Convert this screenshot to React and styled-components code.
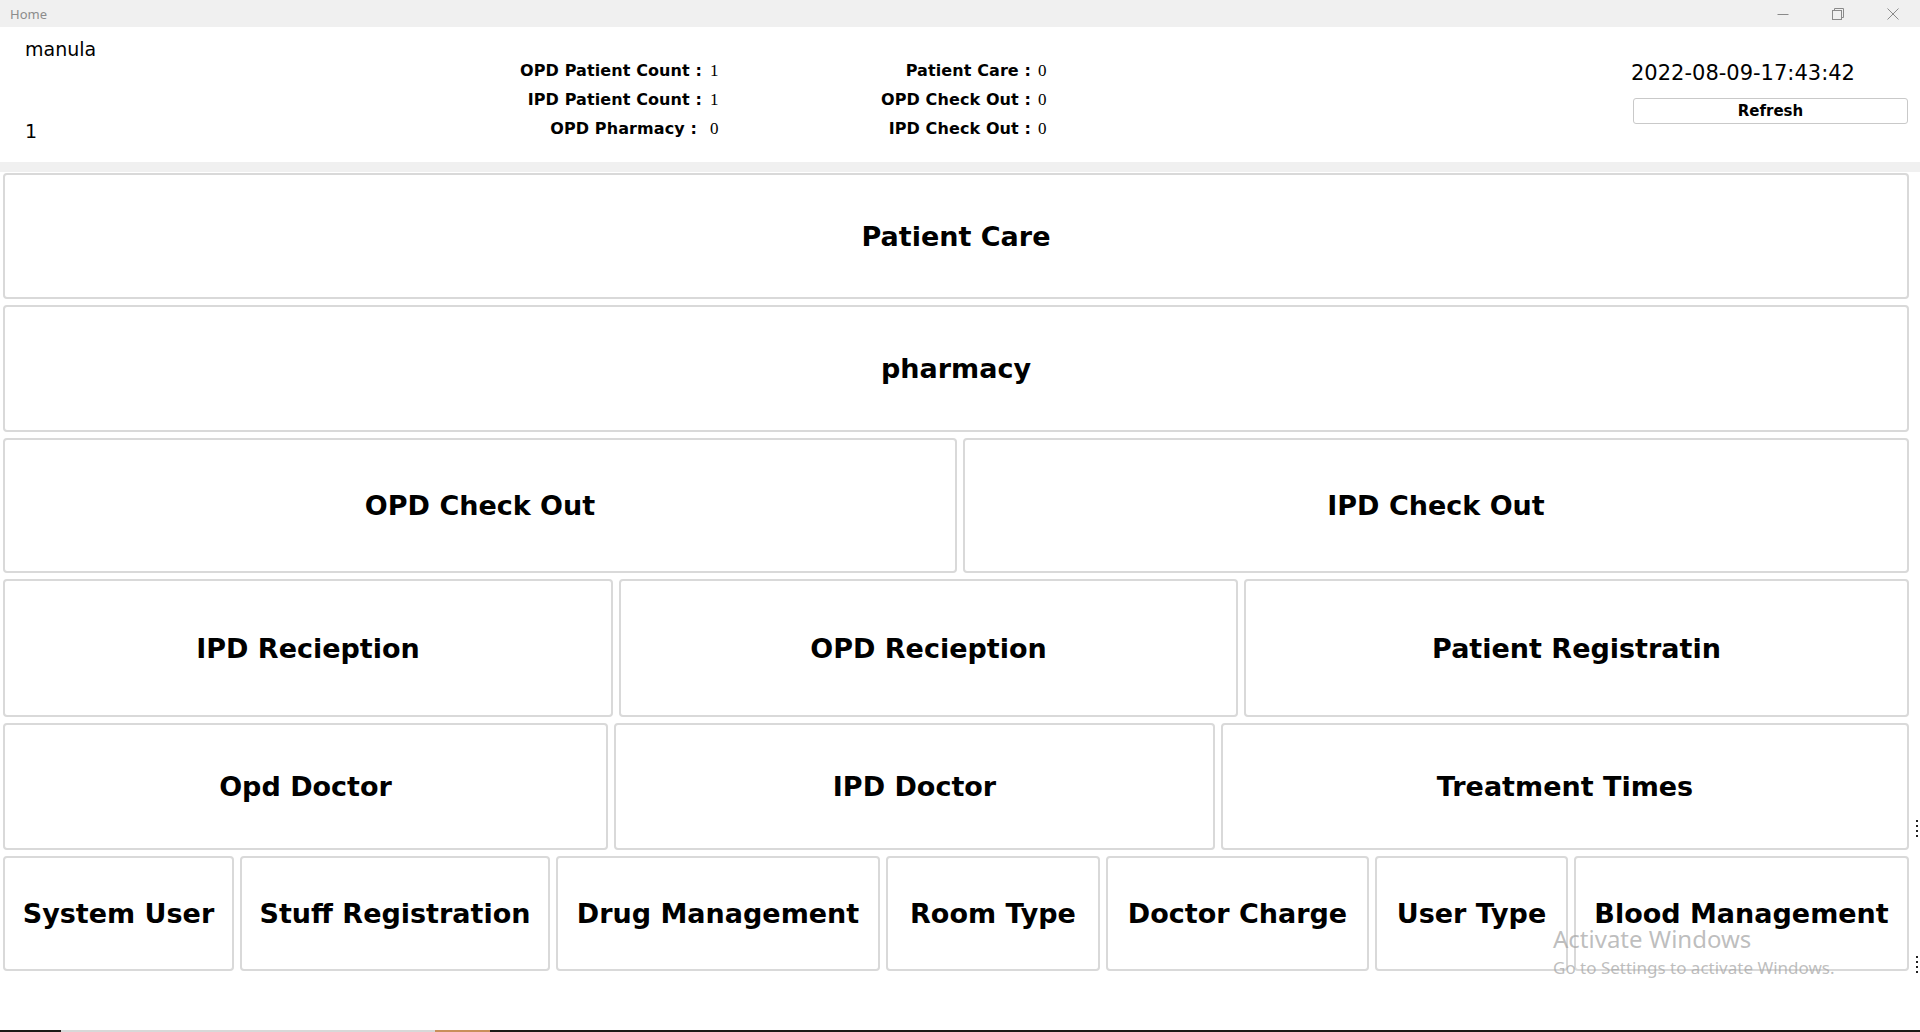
import React from "react";
import styled, { createGlobalStyle } from "styled-components";

const GlobalStyle = createGlobalStyle`
  html, body { margin: 0; padding: 0; background: #fff; overflow: hidden; }
  #root { height: 100vh; }
  * { box-sizing: border-box; }
`;

const Window = styled.div`
  position: relative;
  height: 1032px;
  display: flex;
  flex-direction: column;
  background: #fff;
`;

const TitleBar = styled.div`
  height: 27px;
  flex: none;
  background: #f0f0f0;
  display: flex;
  align-items: center;
`;

const TitleText = styled.span`
  flex: 1;
  padding-left: 10px;
  font-family: "Noto Sans", "Open Sans", sans-serif;
  font-size: 13px;
  color: #8c8c8c;
`;

const Controls = styled.div`
  display: flex;
  height: 100%;
`;

const ControlButton = styled.div`
  width: 55px;
  height: 100%;
  display: flex;
  align-items: center;
  justify-content: center;
`;

const Header = styled.header`
  height: 135px;
  flex: none;
  display: flex;
  background: #fff;
`;

const UserBlock = styled.div`
  width: 425px;
  padding: 10px 0 19px 25px;
  display: flex;
  flex-direction: column;
  justify-content: space-between;
  font-family: "DejaVu Sans", sans-serif;
  font-size: 19px;
  line-height: 24px;
  color: #000;
`;

const Stats = styled.div`
  align-self: flex-start;
  margin-top: 29px;
  display: grid;
  grid-template-columns: 277px 68px 261px 69px;
  grid-auto-rows: 29px;
  align-items: center;
`;

const StatLabel = styled.span`
  text-align: right;
  white-space: nowrap;
  padding-right: ${(p) => p.$extra || 0}px;
  font-family: "DejaVu Sans", sans-serif;
  font-weight: 700;
  font-size: 16px;
  letter-spacing: 0.1px;
  color: #000;
`;

const StatValue = styled.span`
  padding-left: ${(p) => p.$pad}px;
  font-family: "Liberation Serif", serif;
  font-size: 17px;
  color: #000;
`;

const ClockBlock = styled.div`
  margin-left: auto;
  margin-right: 12px;
  width: 275px;
  padding-top: 33px;
  display: flex;
  flex-direction: column;
  gap: 12px;
`;

const Clock = styled.div`
  margin-left: -2px;
  height: 26px;
  line-height: 26px;
  font-family: "DejaVu Sans", sans-serif;
  font-size: 21px;
  color: #000;
`;

const RefreshButton = styled.button`
  height: 26px;
  width: 100%;
  border: 1px solid #c9c9c9;
  border-radius: 3px;
  background: #fff;
  font-family: "DejaVu Sans", sans-serif;
  font-weight: 700;
  font-size: 15px;
  color: #000;
  padding: 0;
`;

const Separator = styled.div`
  height: 10px;
  flex: none;
  background: #f0f0f0;
`;

const Board = styled.main`
  flex: 1;
  display: flex;
  flex-direction: column;
  gap: 6px;
  padding: 1px 11px 0 3px;
`;

const Row = styled.div`
  display: grid;
  grid-template-columns: ${(p) => p.$cols};
  height: ${(p) => p.$h}px;
  column-gap: 6px;
`;

const Tile = styled.button`
  border: 2px solid #d9d9d9;
  border-radius: 4px;
  background: #fff;
  padding: 0;
  display: flex;
  align-items: center;
  justify-content: center;
  white-space: nowrap;
  font-family: "DejaVu Sans", sans-serif;
  font-weight: 700;
  font-size: 27px;
  color: #000;
`;

const TaskbarSliver = styled.div`
  height: 2px;
  flex: none;
  background: linear-gradient(
    to right,
    #1d1a17 0 61px,
    #d8d8d8 61px 435px,
    #c98f5a 435px 490px,
    #1d1a17 490px 100%
  );
`;

const Watermark = styled.div`
  position: absolute;
  left: 1553px;
  top: 923px;
  pointer-events: none;
  font-family: "Noto Sans", "Open Sans", sans-serif;
  color: rgba(165, 165, 165, 0.72);
`;

const WatermarkTitle = styled.div`
  font-size: 24px;
  line-height: 32px;
`;

const WatermarkSub = styled.div`
  font-size: 17px;
  line-height: 22px;
  margin-top: 2px;
`;

const EdgeMark = styled.div`
  position: absolute;
  left: 1916px;
  top: ${(p) => p.$top}px;
  width: 2px;
  height: 18px;
  background: repeating-linear-gradient(to bottom, #222 0 2px, transparent 2px 5px);
`;

const MinIcon = () => (
  <svg width="12" height="12" viewBox="0 0 12 12">
    <line x1="0.5" y1="6.5" x2="11.5" y2="6.5" stroke="#8a8a8a" strokeWidth="1" />
  </svg>
);

const RestoreIcon = () => (
  <svg width="12" height="12" viewBox="0 0 12 12">
    <rect x="0.5" y="2.5" width="9" height="9" fill="none" stroke="#8a8a8a" strokeWidth="1" />
    <path d="M2.5 2.5 V0.5 H11.5 V9.5 H9.5" fill="none" stroke="#8a8a8a" strokeWidth="1" />
  </svg>
);

const CloseIcon = () => (
  <svg width="12" height="12" viewBox="0 0 12 12">
    <path d="M0.5 0.5 L11.5 11.5 M11.5 0.5 L0.5 11.5" stroke="#8a8a8a" strokeWidth="1" />
  </svg>
);

const rows = [
  { h: 126, cols: "1fr", items: ["Patient Care"] },
  { h: 127, cols: "1fr", items: ["pharmacy"] },
  { h: 135, cols: "954px 1fr", items: ["OPD Check Out", "IPD Check Out"] },
  { h: 138, cols: "610px 619px 1fr", items: ["IPD Recieption", "OPD Recieption", "Patient Registratin"] },
  { h: 127, cols: "605px 601px 1fr", items: ["Opd Doctor", "IPD Doctor", "Treatment Times"] },
  {
    h: 115,
    cols: "231px 310px 324px 214px 263px 193px 1fr",
    items: [
      "System User",
      "Stuff Registration",
      "Drug Management",
      "Room Type",
      "Doctor Charge",
      "User Type",
      "Blood Management",
    ],
  },
];

const stats = [
  { l1: "OPD Patient Count :", v1: "1", e1: 0, l2: "Patient Care :", v2: "0", e2: 0 },
  { l1: "IPD Patient Count :", v1: "1", e1: 0, l2: "OPD Check Out :", v2: "0", e2: 0 },
  { l1: "OPD Pharmacy :", v1: "0", e1: 5, l2: "IPD Check Out :", v2: "0", e2: 0 },
];

export default function App() {
  return (
    <>
      <GlobalStyle />
      <Window>
        <TitleBar>
          <TitleText>Home</TitleText>
          <Controls>
            <ControlButton><MinIcon /></ControlButton>
            <ControlButton><RestoreIcon /></ControlButton>
            <ControlButton><CloseIcon /></ControlButton>
          </Controls>
        </TitleBar>
        <Header>
          <UserBlock>
            <span>manula</span>
            <span>1</span>
          </UserBlock>
          <Stats>
            {stats.map((s) => (
              <React.Fragment key={s.l1}>
                <StatLabel $extra={s.e1}>{s.l1}</StatLabel>
                <StatValue $pad={8}>{s.v1}</StatValue>
                <StatLabel $extra={s.e2}>{s.l2}</StatLabel>
                <StatValue $pad={7}>{s.v2}</StatValue>
              </React.Fragment>
            ))}
          </Stats>
          <ClockBlock>
            <Clock>2022-08-09-17:43:42</Clock>
            <RefreshButton>Refresh</RefreshButton>
          </ClockBlock>
        </Header>
        <Separator />
        <Board>
          {rows.map((r, i) => (
            <Row key={i} $h={r.h} $cols={r.cols}>
              {r.items.map((t) => (
                <Tile key={t}>{t}</Tile>
              ))}
            </Row>
          ))}
        </Board>
        <TaskbarSliver />
        <Watermark>
          <WatermarkTitle>Activate Windows</WatermarkTitle>
          <WatermarkSub>Go to Settings to activate Windows.</WatermarkSub>
        </Watermark>
        <EdgeMark $top={820} />
        <EdgeMark $top={956} />
      </Window>
    </>
  );
}
